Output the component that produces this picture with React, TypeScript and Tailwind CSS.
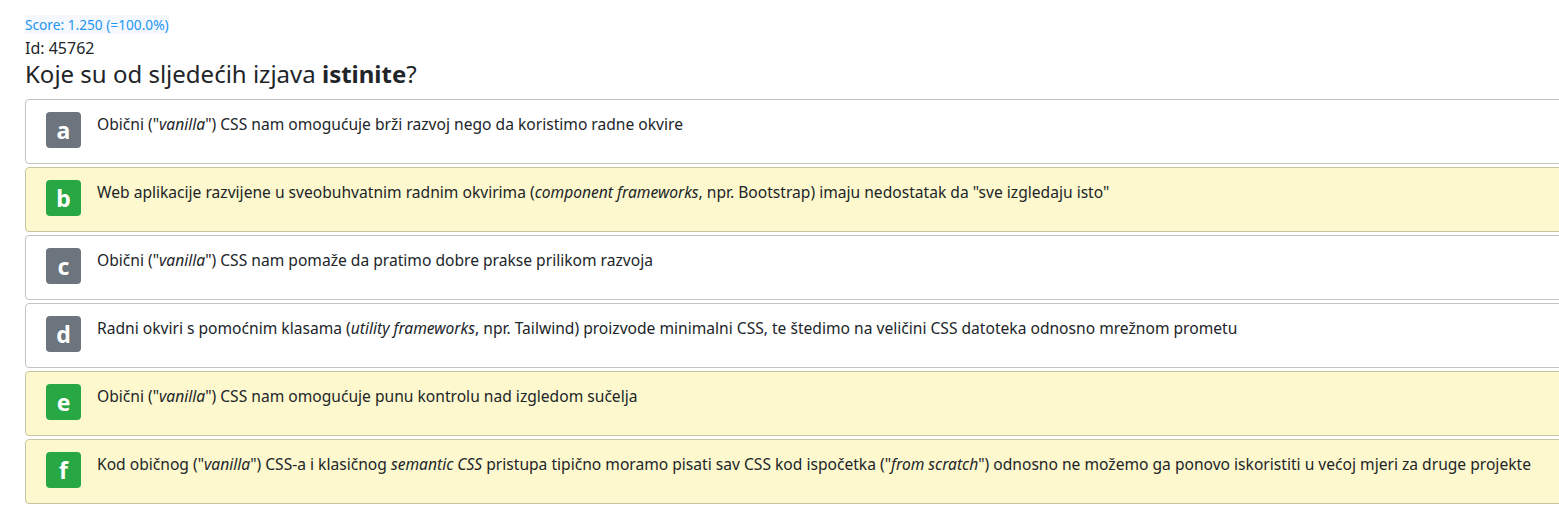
import React from 'react';

type Opt = { key: string; correct: boolean; text: React.ReactNode };

const OPTIONS: Opt[] = [
  { key: 'a', correct: false, text: <>Obični ("<i>vanilla</i>") CSS nam omogućuje brži razvoj nego da koristimo radne okvire</> },
  { key: 'b', correct: true, text: <>Web aplikacije razvijene u sveobuhvatnim radnim okvirima (<i>component frameworks</i>, npr. Bootstrap) imaju nedostatak da "sve izgledaju isto"</> },
  { key: 'c', correct: false, text: <>Obični ("<i>vanilla</i>") CSS nam pomaže da pratimo dobre prakse prilikom razvoja</> },
  { key: 'd', correct: false, text: <>Radni okviri s pomoćnim klasama (<i>utility frameworks</i>, npr. Tailwind) proizvode minimalni CSS, te štedimo na veličini CSS datoteka odnosno mrežnom prometu</> },
  { key: 'e', correct: true, text: <>Obični ("<i>vanilla</i>") CSS nam omogućuje punu kontrolu nad izgledom sučelja</> },
  { key: 'f', correct: true, text: <>Kod običnog ("<i>vanilla</i>") CSS-a i klasičnog <i>semantic CSS</i> pristupa tipično moramo pisati sav CSS kod ispočetka ("<i>from scratch</i>") odnosno ne možemo ga ponovo iskoristiti u većoj mjeri za druge projekte</> },
];

export default function App() {
  return (
    <div className="w-[1559px] h-[532px] overflow-hidden bg-white font-['Noto_Sans',sans-serif] text-[#212529]">
      <div className="pl-[25px] pt-[14px]">
        <div className="text-[13.7px] leading-[22px] text-[#2196f3]">
          <span className="bg-[#f5f8fc]">Score: 1.250 (=100.0%)</span>
        </div>
        <div className="text-[16px] leading-[22px] mt-[1px]">Id: 45762</div>
        <h1 className="text-[24px] leading-[30px] mb-[10px]">
          Koje su od sljedećih izjava <b>istinite</b>?
        </h1>
        <div className="flex flex-col gap-[3px]">
          {OPTIONS.map(o => (
            <div
              key={o.key}
              className={
                o.correct
                  ? 'w-[1560px] h-[65px] flex items-start border border-[#c9c5a3] rounded-[4px] bg-[#fdf8cd]'
                  : 'w-[1560px] h-[65px] flex items-start border border-[#c4c4c4] rounded-[4px] bg-white'
              }
            >
              <div
                className={
                  o.correct
                    ? 'mt-[12px] ml-[20px] w-[35px] h-[36px] rounded-[4px] bg-[#28a745] text-white font-bold text-[23px] flex items-center justify-center leading-none'
                    : 'mt-[12px] ml-[20px] w-[35px] h-[36px] rounded-[4px] bg-[#6c757d] text-white font-bold text-[23px] flex items-center justify-center leading-none'
                }
              >
                {o.key}
              </div>
              <div className="ml-[16px] mt-[13px] text-[15.6px] leading-[22px]">{o.text}</div>
            </div>
          ))}
        </div>
      </div>
    </div>
  );
}
